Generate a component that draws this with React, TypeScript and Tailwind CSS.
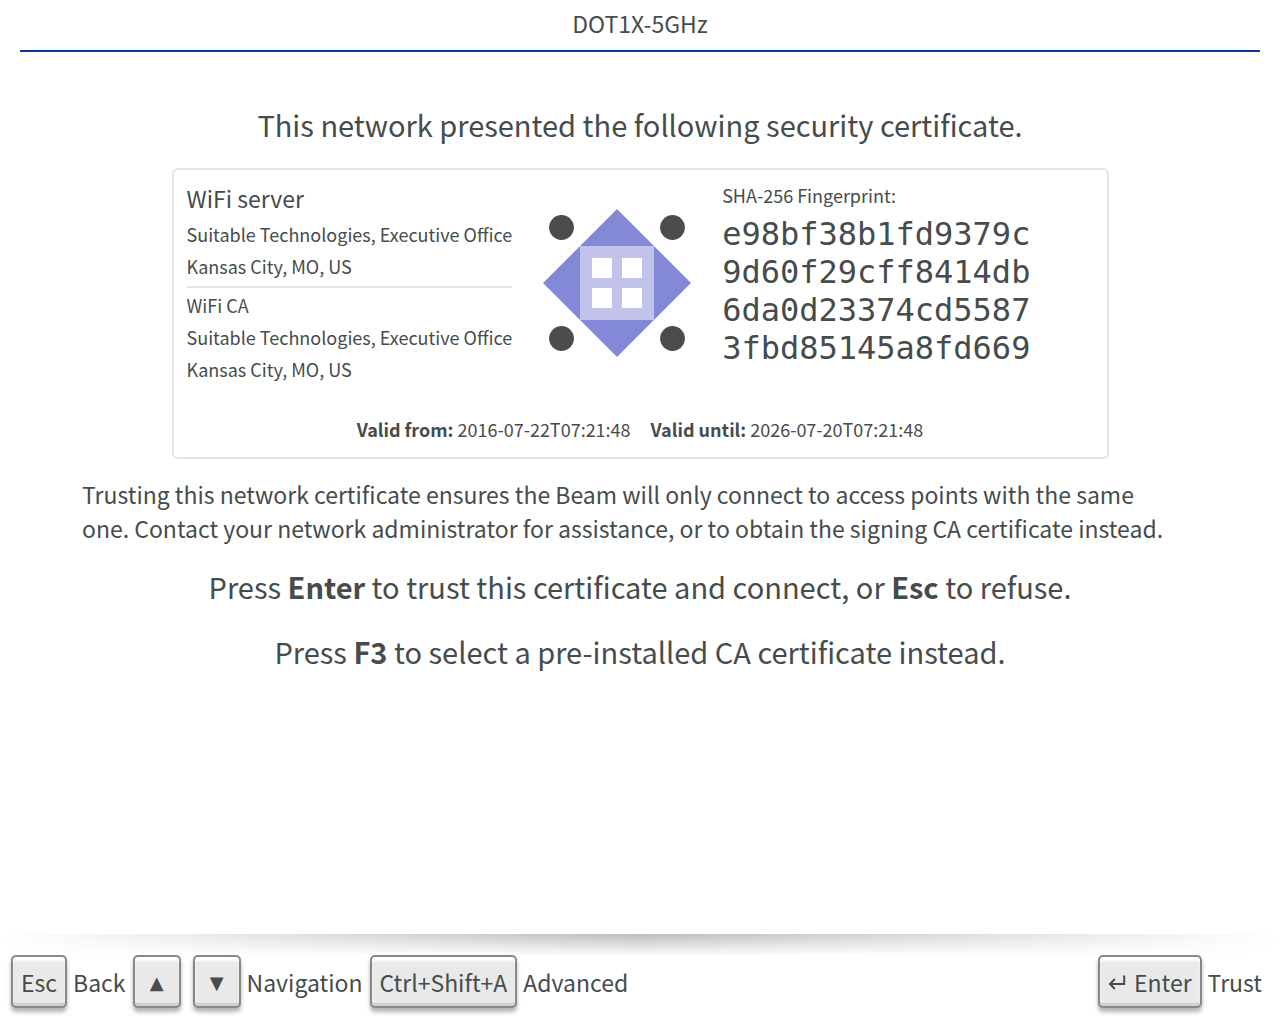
import type { ReactNode } from "react"
import clsx from "clsx"

const fingerprint = ["e98bf38b1fd9379c", "9d60f29cff8414db", "6da0d23374cd5587", "3fbd85145a8fd669"]

function Identicon() {
  return (
    <svg viewBox="0 0 148 148" className="h-[148px] w-[148px] shrink-0" role="img" aria-label="Certificate identicon">
      <path d="M74 0 L148 74 L74 148 L0 74 Z" fill="#8489d7" />
      <rect x="37" y="37" width="74" height="74" fill="#c2c3eb" />
      <path d="M49 49h20v20h-20z M79 49h20v20h-20z M49 79h20v20h-20z M79 79h20v20h-20z" fill="#fff" />
      <g fill="#4c4c4c">
        <circle cx="18.5" cy="18.5" r="12.4" />
        <circle cx="129.5" cy="18.5" r="12.4" />
        <circle cx="18.5" cy="129.5" r="12.4" />
        <circle cx="129.5" cy="129.5" r="12.4" />
      </g>
    </svg>
  )
}

function Key({ children, label, className }: { children: ReactNode; label?: string; className?: string }) {
  return (
    <button
      type="button"
      aria-label={label}
      className={clsx(
        "flex h-[53px] items-center justify-center rounded-[5px] border-2 border-[#888] bg-[#e9e9e9] pt-0.5 shadow-[0_4px_4px_rgba(0,0,0,0.3),inset_0_4px_2px_#fff,inset_0_-3px_1px_#cfcfcf]",
        className
      )}
    >
      {children}
    </button>
  )
}

function KeyLabel({ children }: { children: ReactNode }) {
  return <span className="mr-[7px] ml-1.5 pt-0.5">{children}</span>
}

export default function App() {
  return (
    <div className="flex min-h-screen flex-col bg-white font-['Noto_Sans_CJK_SC',sans-serif] text-[#464c4c]">
      <header className="mx-5 border-b-2 border-[#0a3a9e] pb-1 text-center">
        <h1 className="text-[23px] leading-[46px]">DOT1X-5GHz</h1>
      </header>

      <main className="flex grow flex-col items-center px-5 pt-[51px]">
        <h2 className="text-center text-[29px] leading-[42px]">This network presented the following security certificate.</h2>

        <section className="mt-[23px] w-full max-w-[937px] rounded-md border-2 border-[#e4e4e4] px-[13px] pt-[10px] pb-3 text-[18px] leading-8">
          <div className="flex">
            <div>
              <h3 className="pb-0.5 text-[23px] leading-[36px]">WiFi server</h3>
              <p>Suitable Technologies, Executive Office</p>
              <p>Kansas City, MO, US</p>
              <hr className="mt-1 mb-px border-t-2 border-[#e4e4e4]" />
              <p>WiFi CA</p>
              <p>Suitable Technologies, Executive Office</p>
              <p>Kansas City, MO, US</p>
            </div>
            <div className="mx-[31px] pt-[29px]">
              <Identicon />
            </div>
            <div>
              <p className="leading-[30px]">SHA-256 Fingerprint:</p>
              <div className="pt-[5px] font-['DejaVu_Sans_Mono',monospace] text-[32px] leading-[38px]">
                {fingerprint.map((row) => (
                  <p key={row}>{row}</p>
                ))}
              </div>
            </div>
          </div>
          <div className="mt-7 flex justify-center gap-5">
            <p>
              <b>Valid from:</b> 2016-07-22T07:21:48
            </p>
            <p>
              <b>Valid until:</b> 2026-07-20T07:21:48
            </p>
          </div>
        </section>

        <p className="mt-[18px] w-full max-w-[1116px] pr-4 text-[23px] leading-[34px]">
          Trusting this network certificate ensures the Beam will only connect to access points with the same one. Contact your
          network administrator for assistance, or to obtain the signing CA certificate instead.
        </p>

        <p className="mt-5 text-center text-[29px] leading-[42px]">
          Press <b>Enter</b> to trust this certificate and connect, or <b>Esc</b> to refuse.
        </p>
        <p className="mt-[23px] text-center text-[29px] leading-[42px]">
          Press <b>F3</b> to select a pre-installed CA certificate instead.
        </p>
      </main>

      <footer className="bg-[linear-gradient(to_right,#fff,transparent_50%,#fff),linear-gradient(#bcbcbc,#fff_22px)] px-[11px] pt-[21px] pb-4 text-[23px]">
        <nav className="flex items-center">
          <Key className="px-2">Esc</Key>
          <KeyLabel>Back</KeyLabel>
          <Key label="Up" className="w-12 font-['DejaVu_Sans',sans-serif] text-[18px]">▲</Key>
          <Key label="Down" className="ml-3 w-12 font-['DejaVu_Sans',sans-serif] text-[18px]">▼</Key>
          <KeyLabel>Navigation</KeyLabel>
          <Key className="px-2">Ctrl+Shift+A</Key>
          <KeyLabel>Advanced</KeyLabel>
          <Key className="ml-auto gap-2 px-2">
            <svg viewBox="0 0 18 16" className="h-4 w-[18px]" fill="none" stroke="#464c4c" strokeWidth="2" aria-hidden="true">
              <path d="M16.2 0.5v8.5H2.5 M6.8 4L2 9L6.8 14" />
            </svg>
            Enter
          </Key>
          <KeyLabel>Trust</KeyLabel>
        </nav>
      </footer>
    </div>
  )
}
